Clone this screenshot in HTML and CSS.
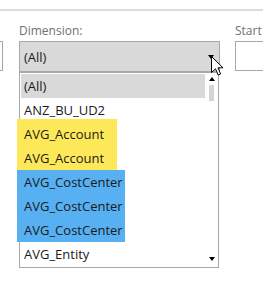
FILE: index.html
```html
<!DOCTYPE html>
<html lang="en">

<head>
    <meta charset="UTF-8">
    <title>Dimension filter</title>
    <link rel="stylesheet" href="styles.css">
</head>

<body>
    <div class="top-rule"></div>

    <div class="filter-row">
        <div class="field field-cut">
            <div class="field-label">&nbsp;</div>
            <div class="input-box"></div>
        </div>

        <div class="field field-dimension">
            <div class="field-label">Dimension:</div>
            <div class="select-box">
                <span class="select-value">(All)</span>
                <span class="arrow-down"></span>
            </div>

            <div class="dropdown">
                <div class="dropdown-items">
                    <div class="item item-current">(All)</div>
                    <div class="item">ANZ_BU_UD2</div>
                    <div class="mark mark-yellow">
                        <div class="item">AVG_Account</div>
                        <div class="item">AVG_Account</div>
                    </div>
                    <div class="mark mark-blue">
                        <div class="item">AVG_CostCenter</div>
                        <div class="item">AVG_CostCenter</div>
                        <div class="item">AVG_CostCenter</div>
                    </div>
                    <div class="item">AVG_Entity</div>
                </div>
                <div class="scrollbar">
                    <span class="arrow-up"></span>
                    <span class="thumb"></span>
                    <span class="arrow-down small"></span>
                </div>
            </div>

            <svg class="cursor" width="13" height="20" viewBox="0 0 13 20">
                <path d="M0.5 0.5 L0.5 16.5 L4.5 12.8 L7.2 19 L9.6 18 L7 11.8 L12 11.8 Z" fill="#fff" stroke="#000" stroke-width="1" stroke-linejoin="miter"/>
            </svg>
        </div>

        <div class="field field-start">
            <div class="field-label">Start</div>
            <div class="input-box"></div>
        </div>
    </div>
</body>

</html>
```

FILE: styles.css
```css
* {
    margin: 0;
    padding: 0;
    box-sizing: border-box;
    font-family: 'Open Sans', sans-serif;
}

body {
    background: #fff;
    width: 263px;
    height: 281px;
    overflow: hidden;
}

.top-rule {
    margin-top: 9px;
    height: 2px;
    background: #dcdcdc;
}

.filter-row {
    display: flex;
    gap: 16px;
    margin-top: 12px;
}

.field {
    position: relative;
    flex-shrink: 0;
}

.field-label {
    font-size: 12px;
    line-height: 16px;
    height: 18px;
    color: #707070;
    white-space: nowrap;
}

.input-box {
    height: 30px;
    border: 1px solid #a8a8a8;
    background: #fff;
}

.field-cut {
    width: 3px;
}

.field-cut .input-box {
    border-left: none;
}

.field-dimension {
    width: 201px;
}

.field-start {
    width: 30px;
    margin-left: -1px;
}

.field-start .input-box {
    border-right: none;
}

.select-box {
    height: 31px;
    border: 1px solid #a8a8a8;
    background: #d9d9d9;
    display: flex;
    align-items: center;
    justify-content: space-between;
    padding: 0 5px 0 4px;
}

.select-value {
    font-size: 13px;
    color: #1a1a1a;
}

.arrow-down {
    width: 0;
    height: 0;
    border-left: 3px solid transparent;
    border-right: 3px solid transparent;
    border-top: 4px solid #000;
}

.arrow-up {
    width: 0;
    height: 0;
    border-left: 3px solid transparent;
    border-right: 3px solid transparent;
    border-bottom: 4px solid #000;
}

.dropdown {
    position: absolute;
    left: 0;
    top: 49px;
    width: 200px;
    height: 196px;
    border: 1px solid #a8a8a8;
    background: #fff;
    display: flex;
    padding: 1px;
}

.dropdown-items {
    width: 184px;
}

.item {
    height: 24px;
    line-height: 24px;
    padding-left: 3px;
    font-size: 13px;
    color: #1a1a1a;
    white-space: nowrap;
}

.item-current {
    background: #d9d9d9;
}

.mark {
    margin-left: -4px;
}

.mark .item {
    padding-left: 7px;
}

.mark-yellow {
    width: 100px;
    background: #fde85a;
    margin-top: -3px;
    padding-top: 3px;
}

.mark-blue {
    width: 108px;
    background: #56b0f2;
}

.scrollbar {
    flex: 1;
    display: flex;
    flex-direction: column;
    align-items: center;
    padding: 3px 0 5px 1px;
}

.thumb {
    width: 5px;
    height: 16px;
    margin-top: 4px;
    background: #d4d4d4;
}

.scrollbar .arrow-down {
    margin-top: auto;
}

.cursor {
    position: absolute;
    left: 192px;
    top: 33px;
}
```
